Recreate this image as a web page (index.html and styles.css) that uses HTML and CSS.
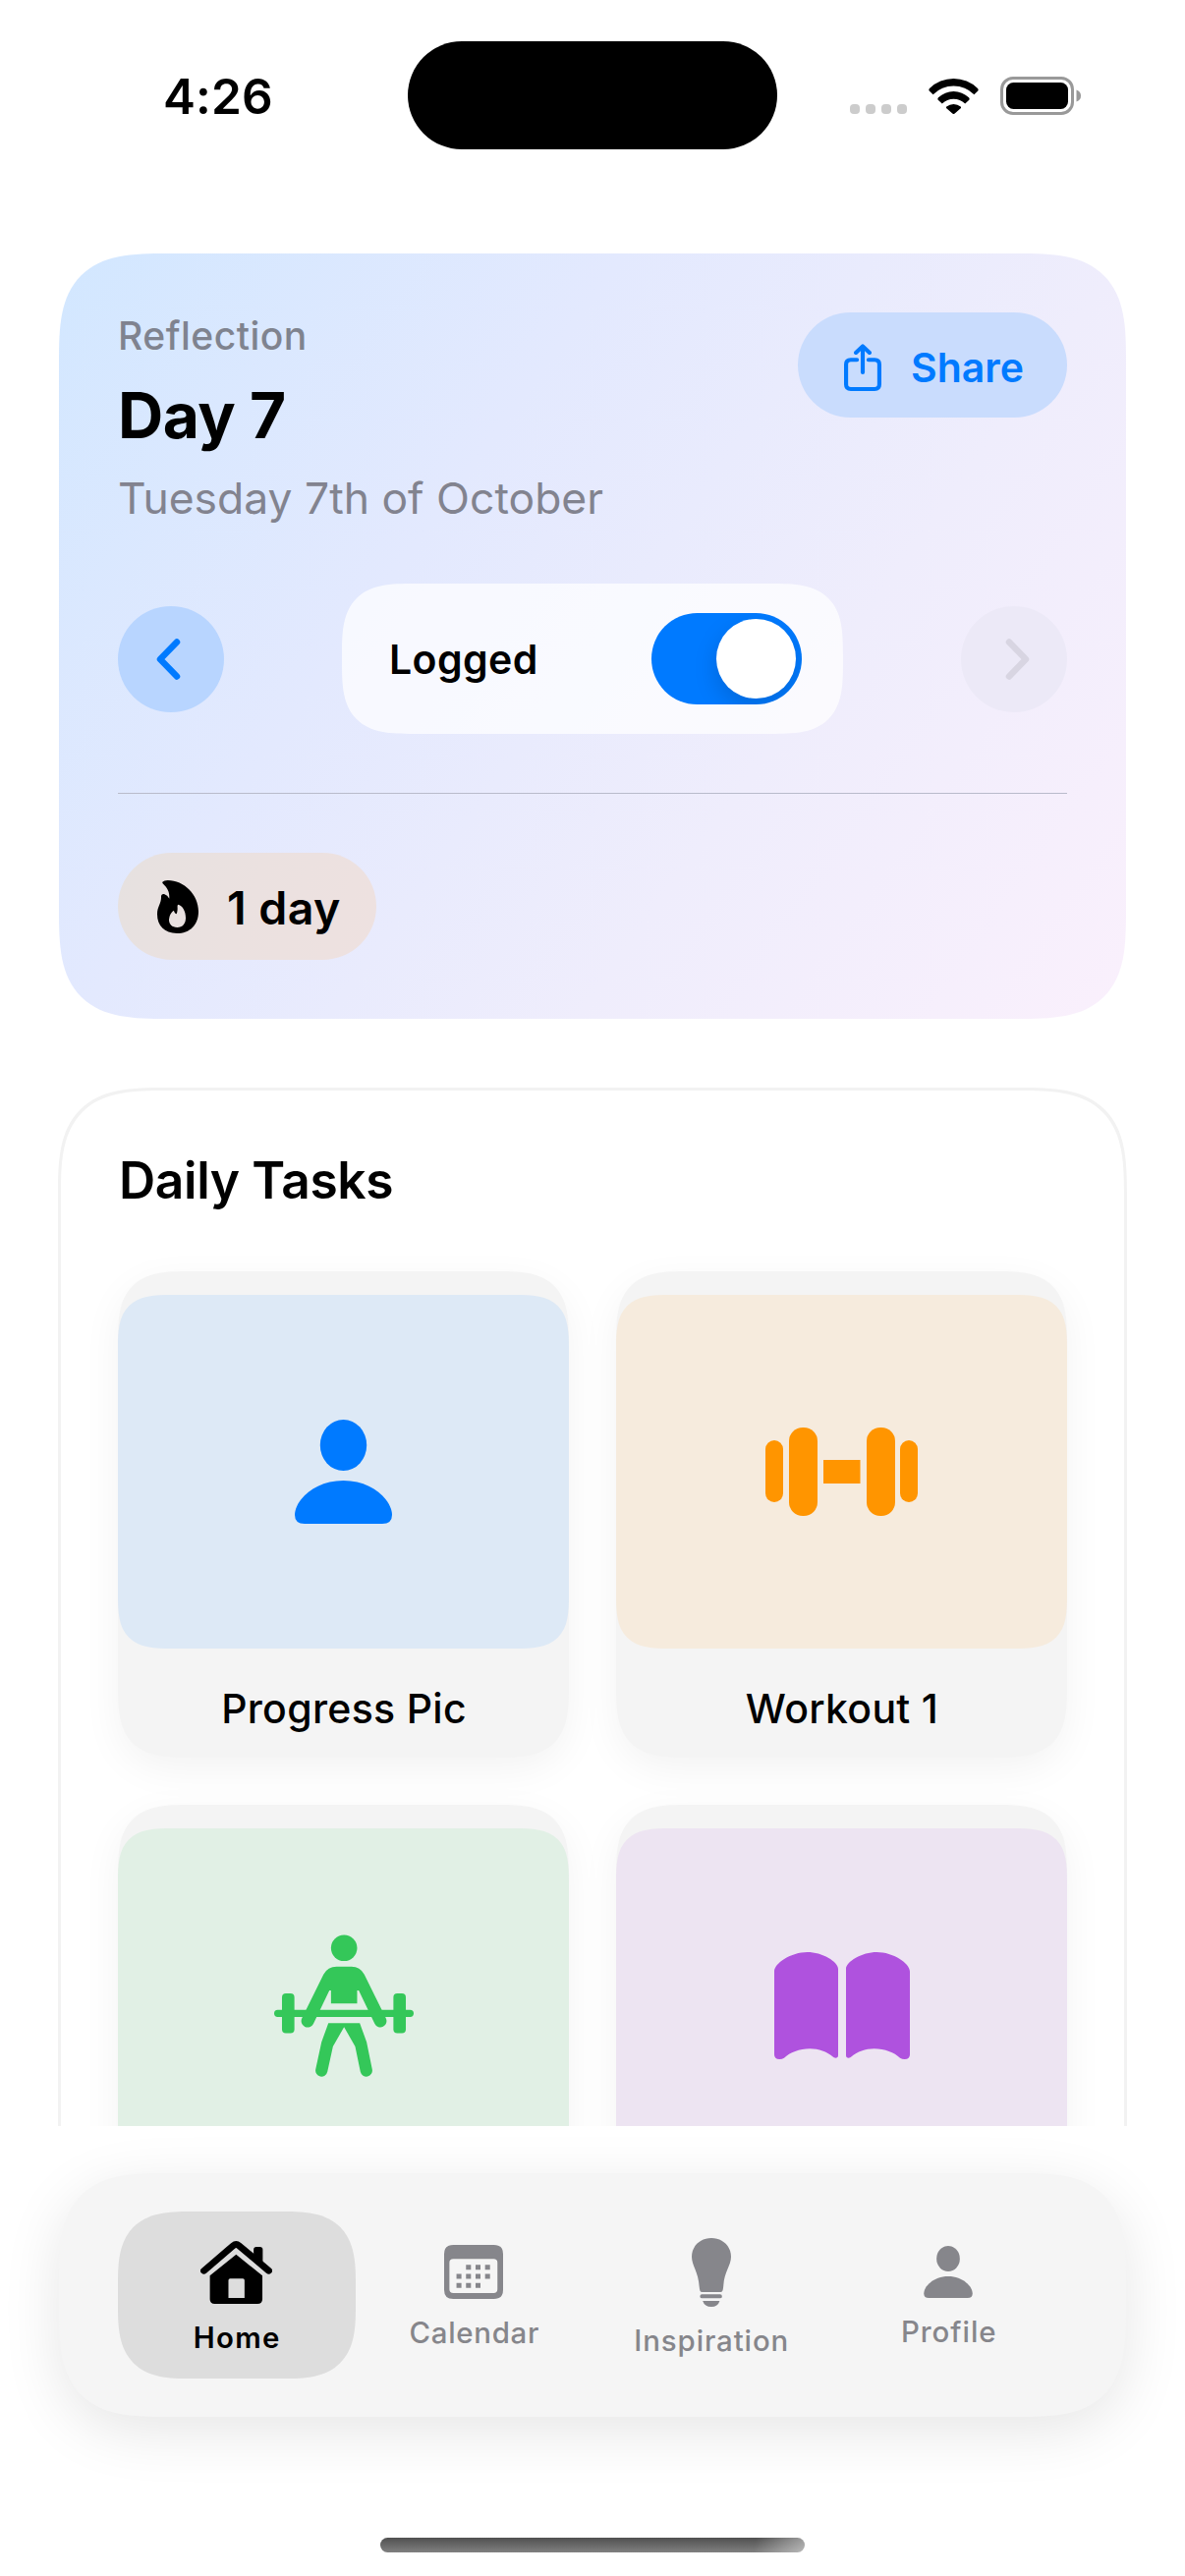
FILE: index.html
```html
<!DOCTYPE html>
<html lang="en">
<head>
<meta charset="utf-8">
<title>Daily Tasks</title>
<link rel="stylesheet" href="styles.css">
</head>
<body>
<header class="status">
  <div class="status-time">4:26</div>
  <div class="island"></div>
  <div class="status-icons">
    <div class="dots"><i></i><i></i><i></i><i></i></div>
    <svg class="wifi" viewBox="0 0 51 37"><path d="M1 11A35 35 0 0 1 50 11Q51.3 12.4 50 13.7L46.4 17.2A29.5 29.5 0 0 0 4.6 17.2L1 13.7Q-.3 12.4 1 11ZM10 20.3A22.500 22.500 0 0 1 41 20.300Q42.300 21.600 41 23L37.200 26.500A17 17 0 0 0 13.800 26.500L10 23Q8.700 21.600 10 20.300ZM18.300 29.500A11.200 11.200 0 0 1 32.700 29.500Q33.500 30.500 32.700 31.300L26.700 36.600Q25.500 37.500 24.300 36.600L18.300 31.300Q17.500 30.500 18.300 29.500Z"/></svg>
    <svg class="battery" viewBox="0 0 82 39"><rect x="1.500" y="1.500" width="72" height="36" rx="11.500" fill="none" stroke="#999" stroke-width="3"/><rect x="6" y="6" width="63" height="27" rx="7.500"/><path d="M77.500 13.500Q82 15 82 19.500T77.500 25.500Z" fill="#999"/></svg>
  </div>
</header>

<main class="scroll">
  <section class="day-card">
    <div class="day-head">
      <div class="day-titles">
        <div class="eyebrow">Reflection</div>
        <h1 class="day-title">Day 7</h1>
        <div class="day-date">Tuesday 7th of October</div>
      </div>
      <button class="share">
        <svg class="share-icon" viewBox="636 327 110 144" preserveAspectRatio="none"><path d="M674 376H656Q642 376 642 390V451Q642 465 656 465H726Q740 465 740 451V390Q740 376 726 376H708M691 336V414M671 354L691 334L711 354"/></svg>
        <span class="share-label">Share</span>
      </button>
    </div>
    <div class="controls">
      <button class="round round-prev"><svg class="chevron" viewBox="0 0 25 42"><path d="M21 3.500L4 21L21 38.500"/></svg></button>
      <div class="logged">
        <span class="logged-label">Logged</span>
        <span class="toggle"><span class="knob"></span></span>
      </div>
      <button class="round round-next"><svg class="chevron" viewBox="0 0 25 42"><path d="M4 3.500L21 21L4 38.500"/></svg></button>
    </div>
    <div class="divider"></div>
    <div class="streak">
      <svg class="flame" viewBox="360 434 126 150" preserveAspectRatio="none"><path fill-rule="evenodd" d="M376 439Q381 434 392 434C442 434 486 475 486 522C486 560 460 584 420 584C382 584 360 562 360 530C360 508 373 500 372 480Q372 472 381 473Q392 476 397 486C398 465 391 456 377 443Q375 441 376 439ZM409 520Q397 530 396 545C396 558 405 567 421 567C438 567 447 556 447 540C447 522 437 505 423 503Q421 506 422 515Q421 530 417 529Q413 527 411 521Z"/></svg>
      <span class="streak-label">1 day</span>
    </div>
  </section>

  <section class="tasks">
    <h2 class="tasks-title">Daily Tasks</h2>
    <div class="grid">
      <article class="task">
        <div class="tile tile-blue"><svg class="person" viewBox="0 0 99 106"><ellipse cx="49.500" cy="26" rx="23.700" ry="26"/><path d="M10 106Q0 106 0 97C0 83 19 62 49.500 62S99 83 99 97Q99 106 89 106Z"/></svg></div>
        <div class="task-label">Progress Pic</div>
      </article>
      <article class="task">
        <div class="tile tile-orange"><svg class="dumbbell" viewBox="0 0 155 90"><rect y="13" width="18" height="63" rx="9"/><rect x="24" width="29" height="90" rx="14"/><rect x="59" y="33" width="37.500" height="24"/><rect x="103" width="29" height="90" rx="14"/><rect x="137" y="13" width="18" height="63" rx="9"/></svg></div>
        <div class="task-label">Workout 1</div>
      </article>
      <article class="task">
        <div class="tile tile-green"><svg class="lifter" viewBox="84 86 427 435"><circle cx="298" cy="127" r="40"/><rect x="84" y="316" width="427" height="22" rx="11"/><rect x="108" y="266" width="38" height="122" rx="12"/><rect x="449" y="266" width="38" height="122" rx="12"/><path d="M275 184H321Q347 184 360 208L426 342A19 19 0 0 1 392 359L343 257H338V297H258V257H253L204 359A19 19 0 0 1 169 342L235 208Q248 184 275 184ZM250 357H346L367 415L384 498A18 18 0 0 1 348 506L332 428L298 369L264 428L247 506A18 18 0 0 1 211 498L229 415Z"/></svg></div>
      </article>
      <article class="task">
        <div class="tile tile-purple"><svg class="book" viewBox="84 81 414 327"><path id="page" d="M84 140C84 115 135 81 185 81C230 81 279 110 279 132V396Q279 404 271 404Q266 404 262 400C245 385 220 376 193 376C160 376 132 388 114 404Q108 408 100 408Q84 408 84 394Z"/><use href="#page" transform="matrix(-1 0 0 1 582 0)"/></svg></div>
      </article>
    </div>
  </section>
</main>

<footer class="dock">
  <nav class="tabs">
    <a class="tab tab-active">
      <svg class="icon-home" viewBox="459 420 205 192" preserveAspectRatio="none"><path d="M469 511L553 434Q561 427 569 434L654 511" fill="none" stroke="#000" stroke-width="20" stroke-linecap="round"/><path d="M611 475V446Q611 438 619 438H629Q637 438 637 446V500ZM561 461L636 526V598Q636 612 622 612H500Q486 612 486 598V526ZM544 535Q539 535 539 540V594H585V540Q585 535 580 535Z" fill-rule="evenodd"/></svg>
      <span class="tab-label">Home</span>
    </a>
    <a class="tab">
      <svg class="icon-calendar" viewBox="1154 435 167 165" preserveAspectRatio="none"><path fill-rule="evenodd" d="M1180 435H1295Q1321 435 1321 463V572Q1321 600 1295 600H1180Q1154 600 1154 572V463Q1154 435 1180 435ZM1180 478Q1169 478 1169 489V571Q1169 582 1180 582H1294Q1305 582 1305 571V489Q1305 478 1294 478Z"/><path d="M1223 495.500V510.500M1250 495.500V510.500M1277 495.500V510.500M1196 523.500V538.500M1223 523.500V538.500M1250 523.500V538.500M1277 523.500V538.500M1196 551.500V566.500M1223 551.500V566.500M1250 551.500V566.500" stroke="#86868b" stroke-width="14"/></svg>
      <span class="tab-label">Calendar</span>
    </a>
    <a class="tab">
      <svg class="icon-bulb" viewBox="269 411 104 210" preserveAspectRatio="none"><path d="M321 411C350 411 373 435 373 468C373 495 355 515 353 555Q352 570 350 573Q349 576 345 576H297Q292 576 291 572Q290 570 289 560C287 515 269 495 269 468C269 435 292 411 321 411ZM298 603H343Q338 621 321 621Q303 621 298 603Z"/><rect x="291" y="583" width="58" height="12" rx="5"/></svg>
      <span class="tab-label tab-label-inspiration">Inspiration</span>
    </a>
    <a class="tab">
      <svg class="icon-profile" viewBox="0 0 99 106"><ellipse cx="49.500" cy="26" rx="23.700" ry="26"/><path d="M10 106Q0 106 0 97C0 83 19 62 49.500 62S99 83 99 97Q99 106 89 106Z"/></svg>
      <span class="tab-label tab-label-profile">Profile</span>
    </a>
  </nav>
  <div class="home-indicator"></div>
</footer>
</body>
</html>
```
FILE: styles.css
```css
* { box-sizing: border-box; }

body {
  margin: 0;
  width: 1206px;
  height: 2622px;
  overflow: hidden;
  display: flex;
  flex-direction: column;
  background: #fff;
  color: #000;
  font-family: Inter, "Liberation Sans", sans-serif;
}

svg { display: block; flex: none; }
h1, h2 { margin: 0; }
button { border: 0; padding: 0; font: inherit; }

/* Status bar */
.status {
  flex: none;
  height: 194px;
  display: grid;
  grid-template-columns: 415px 376px 415px;
  align-items: center;
}
.status-time {
  padding: 2px 0 0 166px;
  font-size: 49.5px;
  font-weight: 600;
  line-height: 60px;
  letter-spacing: 0.14px;
}
.island { height: 110px; border-radius: 55px; background: #000; }
.status-icons { display: flex; align-items: center; padding-left: 74px; gap: 22px; }
.dots { display: flex; gap: 6px; padding-top: 28px; }
.dots i { width: 10px; height: 10px; border-radius: 4px; background: #ccc; }
.wifi { width: 51px; height: 37px; }
.battery { width: 82px; height: 39px; }

/* Scrolling content */
.scroll {
  flex: none;
  height: 1970px;
  overflow: hidden;
  padding-top: 64px;
}

.day-card {
  margin: 0 60px;
  height: 779px;
  padding: 60px;
  border-radius: 78px;
  background: linear-gradient(125.6deg, #d2e7ff, #e3e9fe 35%, #efedfc 66%, #faf0fc);
}
.day-head { display: flex; justify-content: space-between; align-items: flex-start; }
.eyebrow {
  font-size: 39px;
  font-weight: 500;
  line-height: 47px;
  letter-spacing: 0.5px;
  color: #7f838f;
}
.day-title {
  margin: 18px 0 17px;
  font-size: 64px;
  font-weight: 700;
  line-height: 80px;
  letter-spacing: -0.5px;
}
.day-date {
  font-size: 44.4px;
  line-height: 54px;
  letter-spacing: 0.02px;
  color: #82838f;
}
.share {
  width: 274px;
  height: 107px;
  border-radius: 53.5px;
  background: #c9dcfd;
  color: #007aff;
  display: flex;
  align-items: center;
  padding: 4px 0 0 47px;
  gap: 30px;
}
.share-icon { width: 38px; height: 48px; fill: none; stroke: currentColor; stroke-width: 12; stroke-linecap: round; stroke-linejoin: round; }
.share-label { font-size: 41px; font-weight: 600; line-height: 50px; }

.controls { margin-top: 60px; height: 153px; display: flex; align-items: center; justify-content: space-between; }
.round { width: 108px; height: 108px; border-radius: 50%; display: flex; align-items: center; justify-content: center; }
.round-prev { background: #b8d5ff; color: #007aff; padding-right: 6px; }
.round-next { background: #ece9f7; color: #d8d5e2; padding-left: 6px; }
.chevron { width: 25px; height: 42px; fill: none; stroke: currentColor; stroke-width: 6.5; stroke-linecap: round; stroke-linejoin: round; }
.logged {
  width: 510px;
  height: 153px;
  border-radius: 50px;
  background: rgba(255, 255, 255, 0.72);
  display: flex;
  align-items: center;
  justify-content: space-between;
  padding: 0 42px 0 48px;
}
.logged-label { font-size: 41px; font-weight: 600; line-height: 50px; letter-spacing: 0.4px; }
.toggle {
  width: 153px;
  height: 93px;
  border-radius: 46.5px;
  background: #007aff;
  display: flex;
  align-items: center;
  justify-content: flex-end;
  padding-right: 6px;
  overflow: hidden;
}
.knob { width: 81px; height: 81px; border-radius: 50%; background: #fff; box-shadow: 0 9px 24px rgba(0, 0, 0, 0.15); }

.divider { margin: 60px 0; height: 1px; background: #b9bbcb; }
.streak {
  width: 263px;
  height: 109px;
  border-radius: 54.5px;
  background: linear-gradient(110deg, #e6e1e0, #ebe1e0 50%, #eee1e0);
  display: flex;
  align-items: center;
  padding-left: 40px;
  gap: 29px;
}
.flame { width: 42px; height: 54px; }
.streak-label { padding-top: 3px; font-size: 46.5px; font-weight: 600; line-height: 56px; letter-spacing: 0.42px; }

/* Task list */
.tasks {
  margin: 70px 59px 0;
  height: 1300px;
  padding: 61px 58px 0;
  border: 3px solid #f2f2f2;
  border-radius: 78px;
}
.tasks-title { padding-left: 1px; font-size: 51.5px; font-weight: 600; line-height: 60px; letter-spacing: -0.35px; }
.grid { margin-top: 63px; display: grid; grid-template-columns: 1fr 1fr; gap: 48px; }
.task {
  height: 495px;
  padding-top: 24px;
  border-radius: 50px;
  background: #f4f4f4;
  box-shadow: 0 12px 40px rgba(0, 0, 0, 0.05);
}
.tile { height: 360px; border-radius: 38px; display: flex; align-items: center; justify-content: center; }
.tile-blue { background: #dde9f6; fill: #007aff; }
.tile-orange { background: #f6ebdd; fill: #ff9500; }
.tile-green { background: #e1f0e5; fill: #34c759; }
.tile-purple { background: #ede4f2; fill: #af52de; }
.person { width: 99px; height: 106px; }
.dumbbell { width: 155px; height: 90px; }
.lifter { width: 142px; height: 145px; }
.book { width: 138px; height: 109px; }
.task-label { padding: 36px 0 0 1px; text-align: center; font-size: 41px; font-weight: 500; line-height: 50px; letter-spacing: 0.3px; }

/* Tab bar */
.dock { padding: 48px 60px 0; display: flex; flex-direction: column; align-items: center; }
.tabs {
  width: 1086px;
  height: 248px;
  padding: 0 60px;
  border-radius: 78px;
  background: #f5f5f5;
  box-shadow: 0 15px 60px rgba(0, 0, 0, 0.1);
  display: grid;
  grid-template-columns: repeat(4, 1fr);
  align-items: center;
}
.tab {
  height: 170px;
  padding-top: 6px;
  border-radius: 56px;
  display: flex;
  flex-direction: column;
  align-items: center;
  justify-content: center;
  gap: 17px;
  color: #86868b;
  fill: #86868b;
}
.tab-active { background: #ddd; color: #000; fill: #000; }
.icon-home { width: 73px; height: 64px; }
.icon-calendar { width: 60px; height: 55px; }
.icon-bulb { width: 40px; height: 70px; }
.icon-profile { width: 50px; height: 53px; }
.tab-label { padding-left: 1px; font-size: 29.4px; font-weight: 500; line-height: 36px; letter-spacing: 0.7px; }
.tab-active .tab-label { font-weight: 600; letter-spacing: 1.3px; }
.tab-label-inspiration { letter-spacing: 0.9px; }
.tab-label-profile { letter-spacing: 1px; }
.home-indicator {
  margin-top: 123px;
  width: 432px;
  height: 15px;
  border-radius: 7.5px;
  background:
    linear-gradient(100deg, transparent 88%, rgba(255, 255, 255, 0.45)),
    linear-gradient(#505050, #808080);
}

/* Continuous corners */
@supports (corner-shape: squircle) {
  .day-card, .tasks, .tabs { border-radius: 110px; corner-shape: superellipse(1.6); }
  .logged, .task { border-radius: 73px; corner-shape: superellipse(1.6); }
  .tab-active { border-radius: 73px; corner-shape: superellipse(1.5); }
  .tile { border-radius: 55px; corner-shape: superellipse(1.6); }
}
```
